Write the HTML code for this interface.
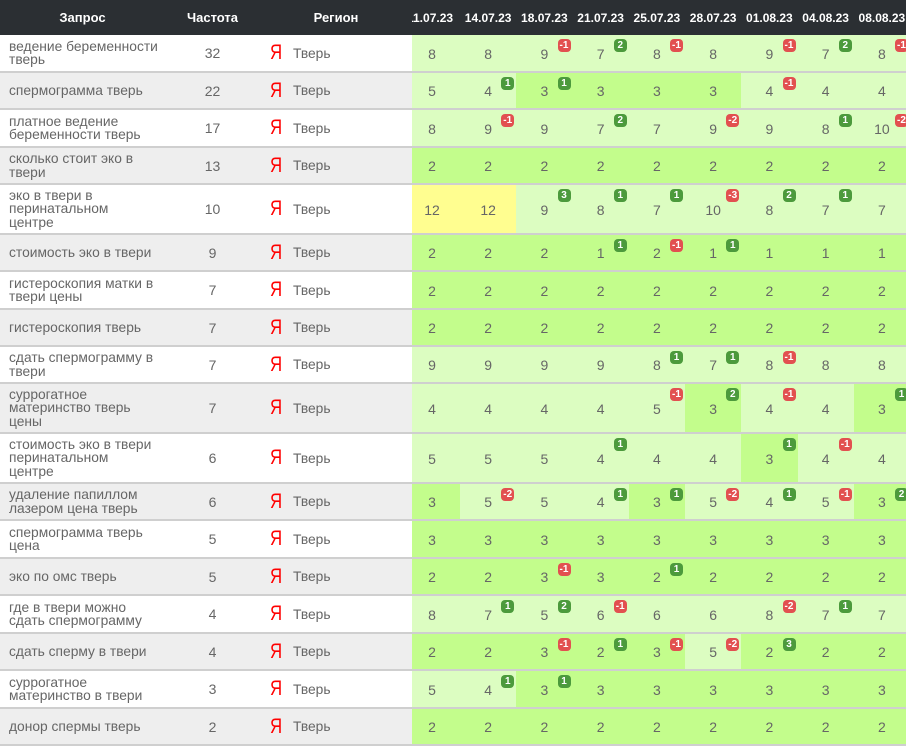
<!DOCTYPE html>
<html><head><meta charset="utf-8"><style>
*{margin:0;padding:0;box-sizing:border-box}
body{width:906px;height:747px;overflow:hidden;background:#fff;font-family:"Liberation Sans","DejaVu Sans",sans-serif;color:#666;font-size:13px}
.h{height:35px;background:#2b2f33;display:flex;color:#fff;font-weight:bold;font-size:13px;align-items:center;width:1000px}
.h div{text-align:center}
.r{display:flex;border-bottom:2px solid #cfcfcf;width:1000px}
.q{width:165px;padding-left:9px;display:flex;align-items:center;line-height:13.5px;color:#666;font-size:13.8px;white-space:nowrap}
.f{width:95px;display:flex;align-items:center;justify-content:center;font-size:14px}
.g{width:152px;display:flex;align-items:center;padding-left:10px;font-size:13.8px}
.g b{color:#f00;font-weight:normal;font-size:21px;width:23px;display:inline-block;transform:scaleX(.8);transform-origin:left center}
.d{width:56.25px;position:relative;display:flex;align-items:center;justify-content:center;font-size:14px;padding-top:1px}
.d.a{width:48px;padding-right:8px}
.L{background:#dcfdc1}.B{background:#c3fd8c}.Y{background:#fffe90}
.d i{position:absolute;top:4px;right:2px;font-style:normal;color:#fff;font-size:10px;font-weight:bold;height:13px;min-width:13px;padding:0 2px;border-radius:4px;line-height:13px;text-align:center}
.p{background:#4c9a3c}.n{background:#e25050}
.hd{width:56.25px;font-size:12px}.hd.a{width:48px;overflow:hidden;text-align:left!important;white-space:nowrap}
</style></head><body>
<div class="h"><div style="width:165px">Запрос</div><div style="width:95px">Частота</div><div style="width:152px">Регион</div><div class="hd a"><span style="margin-left:-5px">11.07.23</span></div><div class="hd">14.07.23</div><div class="hd">18.07.23</div><div class="hd">21.07.23</div><div class="hd">25.07.23</div><div class="hd">28.07.23</div><div class="hd">01.08.23</div><div class="hd">04.08.23</div><div class="hd">08.08.23</div></div>
<div>
<div class="r" style="height:38px;background:#fff"><div class="q">ведение беременности<br>тверь</div><div class="f">32</div><div class="g"><b>Я</b>Тверь</div><div class="d a L">8</div><div class="d L">8</div><div class="d L">9<i class="n">-1</i></div><div class="d L">7<i class="p">2</i></div><div class="d L">8<i class="n">-1</i></div><div class="d L">8</div><div class="d L">9<i class="n">-1</i></div><div class="d L">7<i class="p">2</i></div><div class="d L">8<i class="n">-1</i></div></div>
<div class="r" style="height:37px;background:#eee"><div class="q">спермограмма тверь</div><div class="f">22</div><div class="g"><b>Я</b>Тверь</div><div class="d a L">5</div><div class="d L">4<i class="p">1</i></div><div class="d B">3<i class="p">1</i></div><div class="d B">3</div><div class="d B">3</div><div class="d B">3</div><div class="d L">4<i class="n">-1</i></div><div class="d L">4</div><div class="d L">4</div></div>
<div class="r" style="height:38px;background:#fff"><div class="q">платное ведение<br>беременности тверь</div><div class="f">17</div><div class="g"><b>Я</b>Тверь</div><div class="d a L">8</div><div class="d L">9<i class="n">-1</i></div><div class="d L">9</div><div class="d L">7<i class="p">2</i></div><div class="d L">7</div><div class="d L">9<i class="n">-2</i></div><div class="d L">9</div><div class="d L">8<i class="p">1</i></div><div class="d L">10<i class="n">-2</i></div></div>
<div class="r" style="height:37px;background:#eee"><div class="q">сколько стоит эко в<br>твери</div><div class="f">13</div><div class="g"><b>Я</b>Тверь</div><div class="d a B">2</div><div class="d B">2</div><div class="d B">2</div><div class="d B">2</div><div class="d B">2</div><div class="d B">2</div><div class="d B">2</div><div class="d B">2</div><div class="d B">2</div></div>
<div class="r" style="height:50px;background:#fff"><div class="q">эко в твери в<br>перинатальном<br>центре</div><div class="f">10</div><div class="g"><b>Я</b>Тверь</div><div class="d a Y">12</div><div class="d Y">12</div><div class="d L">9<i class="p">3</i></div><div class="d L">8<i class="p">1</i></div><div class="d L">7<i class="p">1</i></div><div class="d L">10<i class="n">-3</i></div><div class="d L">8<i class="p">2</i></div><div class="d L">7<i class="p">1</i></div><div class="d L">7</div></div>
<div class="r" style="height:37px;background:#eee"><div class="q">стоимость эко в твери</div><div class="f">9</div><div class="g"><b>Я</b>Тверь</div><div class="d a B">2</div><div class="d B">2</div><div class="d B">2</div><div class="d B">1<i class="p">1</i></div><div class="d B">2<i class="n">-1</i></div><div class="d B">1<i class="p">1</i></div><div class="d B">1</div><div class="d B">1</div><div class="d B">1</div></div>
<div class="r" style="height:38px;background:#fff"><div class="q">гистероскопия матки в<br>твери цены</div><div class="f">7</div><div class="g"><b>Я</b>Тверь</div><div class="d a B">2</div><div class="d B">2</div><div class="d B">2</div><div class="d B">2</div><div class="d B">2</div><div class="d B">2</div><div class="d B">2</div><div class="d B">2</div><div class="d B">2</div></div>
<div class="r" style="height:37px;background:#eee"><div class="q">гистероскопия тверь</div><div class="f">7</div><div class="g"><b>Я</b>Тверь</div><div class="d a B">2</div><div class="d B">2</div><div class="d B">2</div><div class="d B">2</div><div class="d B">2</div><div class="d B">2</div><div class="d B">2</div><div class="d B">2</div><div class="d B">2</div></div>
<div class="r" style="height:37px;background:#fff"><div class="q">сдать спермограмму в<br>твери</div><div class="f">7</div><div class="g"><b>Я</b>Тверь</div><div class="d a L">9</div><div class="d L">9</div><div class="d L">9</div><div class="d L">9</div><div class="d L">8<i class="p">1</i></div><div class="d L">7<i class="p">1</i></div><div class="d L">8<i class="n">-1</i></div><div class="d L">8</div><div class="d L">8</div></div>
<div class="r" style="height:50px;background:#eee"><div class="q">суррогатное<br>материнство тверь<br>цены</div><div class="f">7</div><div class="g"><b>Я</b>Тверь</div><div class="d a L">4</div><div class="d L">4</div><div class="d L">4</div><div class="d L">4</div><div class="d L">5<i class="n">-1</i></div><div class="d B">3<i class="p">2</i></div><div class="d L">4<i class="n">-1</i></div><div class="d L">4</div><div class="d B">3<i class="p">1</i></div></div>
<div class="r" style="height:50px;background:#fff"><div class="q">стоимость эко в твери<br>перинатальном<br>центре</div><div class="f">6</div><div class="g"><b>Я</b>Тверь</div><div class="d a L">5</div><div class="d L">5</div><div class="d L">5</div><div class="d L">4<i class="p">1</i></div><div class="d L">4</div><div class="d L">4</div><div class="d B">3<i class="p">1</i></div><div class="d L">4<i class="n">-1</i></div><div class="d L">4</div></div>
<div class="r" style="height:37px;background:#eee"><div class="q">удаление папиллом<br>лазером цена тверь</div><div class="f">6</div><div class="g"><b>Я</b>Тверь</div><div class="d a B">3</div><div class="d L">5<i class="n">-2</i></div><div class="d L">5</div><div class="d L">4<i class="p">1</i></div><div class="d B">3<i class="p">1</i></div><div class="d L">5<i class="n">-2</i></div><div class="d L">4<i class="p">1</i></div><div class="d L">5<i class="n">-1</i></div><div class="d B">3<i class="p">2</i></div></div>
<div class="r" style="height:38px;background:#fff"><div class="q">спермограмма тверь<br>цена</div><div class="f">5</div><div class="g"><b>Я</b>Тверь</div><div class="d a B">3</div><div class="d B">3</div><div class="d B">3</div><div class="d B">3</div><div class="d B">3</div><div class="d B">3</div><div class="d B">3</div><div class="d B">3</div><div class="d B">3</div></div>
<div class="r" style="height:37px;background:#eee"><div class="q">эко по омс тверь</div><div class="f">5</div><div class="g"><b>Я</b>Тверь</div><div class="d a B">2</div><div class="d B">2</div><div class="d B">3<i class="n">-1</i></div><div class="d B">3</div><div class="d B">2<i class="p">1</i></div><div class="d B">2</div><div class="d B">2</div><div class="d B">2</div><div class="d B">2</div></div>
<div class="r" style="height:38px;background:#fff"><div class="q">где в твери можно<br>сдать спермограмму</div><div class="f">4</div><div class="g"><b>Я</b>Тверь</div><div class="d a L">8</div><div class="d L">7<i class="p">1</i></div><div class="d L">5<i class="p">2</i></div><div class="d L">6<i class="n">-1</i></div><div class="d L">6</div><div class="d L">6</div><div class="d L">8<i class="n">-2</i></div><div class="d L">7<i class="p">1</i></div><div class="d L">7</div></div>
<div class="r" style="height:37px;background:#eee"><div class="q">сдать сперму в твери</div><div class="f">4</div><div class="g"><b>Я</b>Тверь</div><div class="d a B">2</div><div class="d B">2</div><div class="d B">3<i class="n">-1</i></div><div class="d B">2<i class="p">1</i></div><div class="d B">3<i class="n">-1</i></div><div class="d L">5<i class="n">-2</i></div><div class="d B">2<i class="p">3</i></div><div class="d B">2</div><div class="d B">2</div></div>
<div class="r" style="height:38px;background:#fff"><div class="q">суррогатное<br>материнство в твери</div><div class="f">3</div><div class="g"><b>Я</b>Тверь</div><div class="d a L">5</div><div class="d L">4<i class="p">1</i></div><div class="d B">3<i class="p">1</i></div><div class="d B">3</div><div class="d B">3</div><div class="d B">3</div><div class="d B">3</div><div class="d B">3</div><div class="d B">3</div></div>
<div class="r" style="height:37px;background:#eee"><div class="q">донор спермы тверь</div><div class="f">2</div><div class="g"><b>Я</b>Тверь</div><div class="d a B">2</div><div class="d B">2</div><div class="d B">2</div><div class="d B">2</div><div class="d B">2</div><div class="d B">2</div><div class="d B">2</div><div class="d B">2</div><div class="d B">2</div></div>
</div>
</body></html>
